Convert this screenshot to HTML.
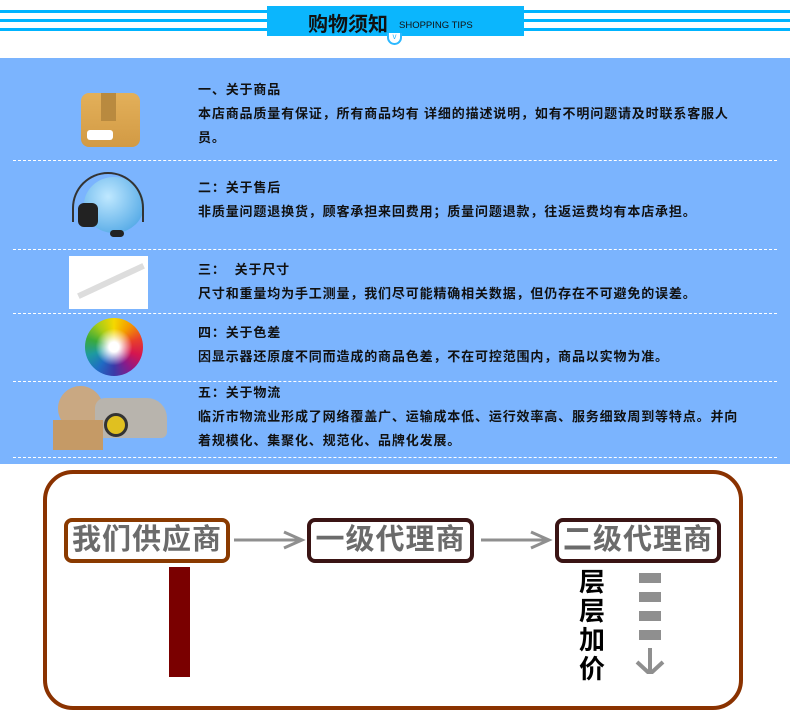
<!DOCTYPE html>
<html><head><meta charset="utf-8"><style>
*{margin:0;padding:0;box-sizing:border-box}
body{width:790px;height:672px;overflow:hidden;background:#fff;font-family:"Liberation Sans","Noto Sans CJK SC",sans-serif;position:relative}
.abs{position:absolute}
.ln{position:absolute;left:0;width:790px;height:3px;background:#00b4ff}
.blue{position:absolute;left:0;top:58px;width:790px;height:406px;background:#7bb4fe}
.sep{position:absolute;left:13px;width:764px;border-top:1px dashed #fff}
.t{position:absolute;left:198px;font-size:13px;letter-spacing:0.85px;font-weight:bold;color:#111;line-height:24px;width:548px}
.box{position:absolute;height:45px;border:4px solid #3a1414;border-radius:8px;background:#fff;color:#6b6b6b;font-weight:bold;font-size:29px;text-align:center;line-height:36px;letter-spacing:1px}
.dash{position:absolute;left:639px;width:22px;height:10px;background:#8f8f8f}
</style></head><body>
<div class="ln" style="top:10px"></div>
<div class="ln" style="top:19px"></div>
<div class="ln" style="top:28px"></div>
<div class="abs" style="left:267px;top:6px;width:257px;height:30px;background:#0bb6fd"></div>
<div class="abs" style="left:308px;top:8px;font-size:20px;font-weight:bold;color:#111">购物须知</div>
<div class="abs" style="left:399px;top:20px;font-size:9.5px;color:#111">SHOPPING TIPS</div>
<div class="abs" style="left:387px;top:33px;width:15px;height:12px;border:2px solid #2bb8ff;border-top:none;border-radius:0 0 8px 8px;background:#fff;font-size:8px;color:#2bb8ff;text-align:center;line-height:8px">v</div>

<div class="blue"></div>
<div class="sep" style="top:160px"></div>
<div class="sep" style="top:249px"></div>
<div class="sep" style="top:313px"></div>
<div class="sep" style="top:381px"></div>
<div class="sep" style="top:457px"></div>

<div class="abs" style="left:81px;top:93px;width:59px;height:54px;border-radius:8px;background:linear-gradient(#e3b05a,#d29a44)"></div>
<div class="abs" style="left:101px;top:93px;width:15px;height:28px;background:#b98a3f"></div>
<div class="abs" style="left:87px;top:130px;width:26px;height:10px;background:#fff;border-radius:3px"></div>
<div class="abs" style="left:84px;top:177px;width:60px;height:56px;border-radius:50%;background:radial-gradient(circle at 40% 35%,#bfe8ff,#3a9ae0)"></div>
<div class="abs" style="left:72px;top:172px;width:72px;height:50px;border:2px solid #333;border-bottom:none;border-radius:36px 36px 0 0"></div>
<div class="abs" style="left:78px;top:203px;width:20px;height:24px;background:#222;border-radius:6px"></div>
<div class="abs" style="left:110px;top:230px;width:14px;height:7px;background:#222;border-radius:4px"></div>
<div class="abs" style="left:69px;top:256px;width:79px;height:53px;background:#fff"></div>
<div class="abs" style="left:75px;top:278px;width:72px;height:6px;background:#ddd;transform:rotate(-25deg)"></div>
<div class="abs" style="left:85px;top:318px;width:58px;height:58px;border-radius:50%;background:radial-gradient(circle,#fff 0 12%,transparent 45%),conic-gradient(#f5d800,#f39a00,#e8402a,#d4154f,#8a1a8a,#3a3aa8,#1f6cc4,#1d9aa0,#3aaa3a,#a8cc18,#f5d800)"></div>
<div class="abs" style="left:58px;top:386px;width:45px;height:45px;border-radius:50%;background:#c9a882"></div>
<div class="abs" style="left:95px;top:398px;width:72px;height:40px;border-radius:10px 20px 6px 6px;background:#b8b4ad"></div>
<div class="abs" style="left:104px;top:413px;width:24px;height:24px;border-radius:50%;background:#e0c020;border:3px solid #333"></div>
<div class="abs" style="left:53px;top:420px;width:50px;height:30px;background:#c59a66"></div>

<div class="t" style="top:78px">一、关于商品<br>本店商品质量有保证，所有商品均有 详细的描述说明，如有不明问题请及时联系客服人员。</div>
<div class="t" style="top:176px">二：关于售后<br>非质量问题退换货，顾客承担来回费用；质量问题退款，往返运费均有本店承担。</div>
<div class="t" style="top:258px">三：&nbsp; 关于尺寸<br>尺寸和重量均为手工测量，我们尽可能精确相关数据，但仍存在不可避免的误差。</div>
<div class="t" style="top:321px">四：关于色差<br>因显示器还原度不同而造成的商品色差，不在可控范围内，商品以实物为准。</div>
<div class="t" style="top:381px">五：关于物流<br>临沂市物流业形成了网络覆盖广、运输成本低、运行效率高、服务细致周到等特点。并向着规模化、集聚化、规范化、品牌化发展。</div>

<div class="abs" style="left:43px;top:470px;width:700px;height:240px;border:4px solid #8a3200;border-radius:30px"></div>
<div class="box" style="left:64px;top:518px;width:166px;border-color:#8a3a00">我们供应商</div>
<div class="box" style="left:307px;top:518px;width:167px">一级代理商</div>
<div class="box" style="left:555px;top:518px;width:166px">二级代理商</div>
<svg class="abs" style="left:232px;top:528px" width="74" height="24"><path d="M2 12H70M52 4L70 12L52 20" stroke="#8f8f8f" stroke-width="3" fill="none"/></svg>
<svg class="abs" style="left:479px;top:528px" width="74" height="24"><path d="M2 12H70M52 4L70 12L52 20" stroke="#8f8f8f" stroke-width="3" fill="none"/></svg>
<div class="abs" style="left:169px;top:567px;width:21px;height:110px;background:#7a0000"></div>
<div class="abs" style="left:579px;top:568px;width:28px;font-size:26px;font-weight:bold;line-height:29px;color:#000">层层加价</div>
<div class="dash" style="top:573px"></div>
<div class="dash" style="top:592px"></div>
<div class="dash" style="top:611px"></div>
<div class="dash" style="top:630px"></div>
<svg class="abs" style="left:633px;top:648px" width="34" height="26"><path d="M17 0V26M4 14L17 26L30 14" stroke="#8f8f8f" stroke-width="4" fill="none"/></svg>
</body></html>
